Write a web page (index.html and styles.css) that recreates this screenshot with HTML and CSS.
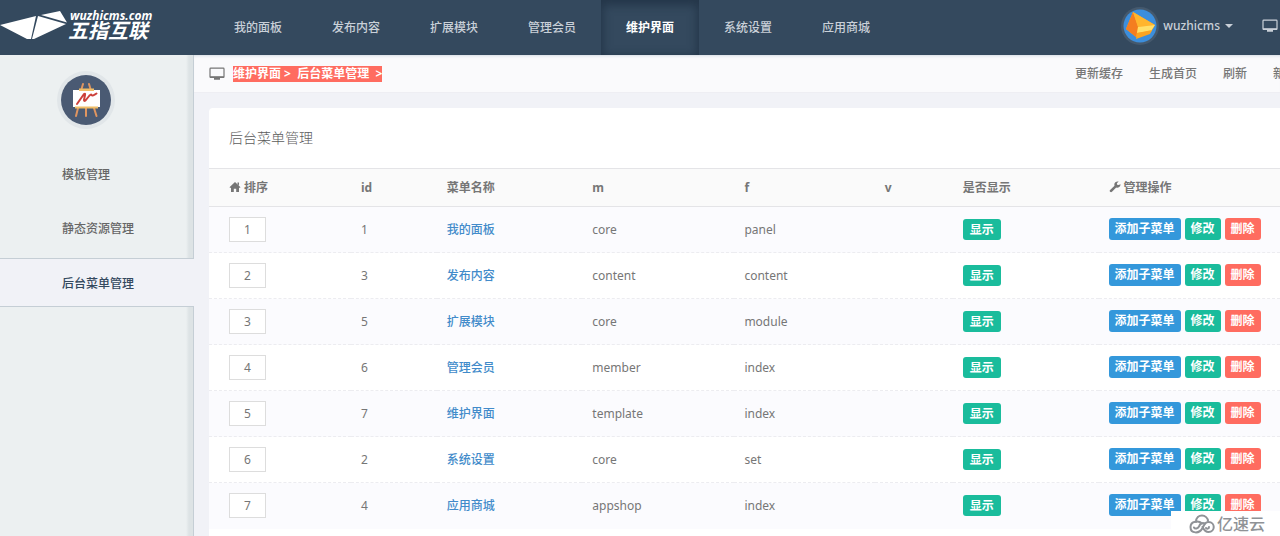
FILE: index.html
```html
<!DOCTYPE html>
<html lang="zh-CN">
<head>
<meta charset="utf-8">
<title>后台菜单管理</title>
<link rel="stylesheet" href="styles.css">
</head>
<body>
<svg class="defs" width="0" height="0" aria-hidden="true">
  <symbol id="monitor" viewBox="0 0 16 14"><path fill="none" stroke="currentColor" stroke-width="1.2" d="M1.700 1.200h12.600q.7 0 .7.7v7.800q0 .7-.7.7H1.700q-.7 0-.7-.7V1.900q0-.7.7-.7z"/><path fill="currentColor" d="M1 9.200h14v1.500H1zM5 10.500h6v2.300H5z"/></symbol>
</svg>
<header class="header">
  <a class="logo" href="#">
    <svg class="logo-mark" viewBox="0 0 68 32" aria-hidden="true"><path fill="#fff" d="M0 15 36 6 31 29 27 29zM38 6 66 14 34 29 32 29zM41 5 60 1 67 12.500z"/></svg>
    <span class="logo-text"><span class="logo-domain">wuzhicms.com</span><span class="logo-name">五指互联</span></span>
  </a>
  <nav class="nav">
    <a href="#">我的面板</a><a href="#">发布内容</a><a href="#">扩展模块</a><a href="#">管理会员</a><a class="active" href="#">维护界面</a><a href="#">系统设置</a><a href="#">应用商城</a>
  </nav>
  <div class="user">
    <button class="user-menu" type="button">
      <svg class="avatar" viewBox="0 0 40 40" aria-hidden="true"><circle cx="20" cy="20" r="19" fill="#45596d"/><circle cx="20" cy="20" r="16.500" fill="#3c8edc"/><path fill="#f9a526" d="M13 6 35 19 31 26 16 31 6 23z"/><path fill="#f47d20" d="M13 6 6 23 16 31 18 21z"/><path fill="#ffb52d" d="M13 6 35 19 18 21z"/><path fill="#ffdf69" d="M18 21 35 19 31 25 17 27z"/><path fill="#fba421" d="m17 27 15-3-2 4-14 5z"/></svg>
      <span>wuzhicms</span><span class="caret"></span>
    </button>
    <svg class="icon" role="img" aria-label="前台"><use href="#monitor"/></svg>
  </div>
</header>
<div class="body">
  <aside class="sidebar">
    <svg class="badge" viewBox="0 0 60 60" aria-hidden="true"><circle cx="30" cy="30" r="29" fill="#e1e6e9"/><circle cx="30" cy="30" r="25" fill="#4a5a73"/><g stroke="#e09560" stroke-width="2" stroke-linecap="round"><path d="m27 14-1.500 5M33 14l1.500 5M22 38l-2 8M30 38v8M38 38l2.500 8"/></g><path fill="#fff" d="M17 20h27v17H17z"/><path fill="#f0be68" d="M23 18.500h15v2.500H23zM19 36.500h23v2H19z"/><path fill="none" stroke="#cc403b" stroke-width="2" stroke-linecap="round" stroke-linejoin="round" d="m21 34 7-10q1.500-1 1 1l-1 5q0 1.500 1.500.5l4-5q1.500-1.500 2-.5 1 1.500 5-1.500"/></svg>
    <nav class="side-nav">
      <a href="#">模板管理</a>
      <a href="#">静态资源管理</a>
      <a class="active" href="#">后台菜单管理</a>
    </nav>
  </aside>
  <main class="main">
    <div class="toolbar">
      <svg class="icon" aria-hidden="true"><use href="#monitor"/></svg>
      <span class="crumbs">维护界面 &gt;&nbsp; 后台菜单管理 &nbsp;&gt;</span>
      <nav class="tools"><a href="#">更新缓存</a><a href="#">生成首页</a><a href="#">刷新</a><a href="#">新</a></nav>
    </div>
    <section class="card">
      <h1>后台菜单管理</h1>
      <table>
        <colgroup><col class="c-sort"><col class="c-id"><col class="c-name"><col class="c-m"><col class="c-f"><col class="c-v"><col class="c-show"><col></colgroup>
        <thead><tr>
          <th><svg class="th-icon" viewBox="0 0 12 12" aria-hidden="true"><path fill="currentColor" d="M6 1 11.500 6.200 10.700 7 10 6.400V11H7.200V7.800H4.800V11H2V6.400L1.300 7 .5 6.200zM8.500 1.500H10v3L8.500 3z"/></svg>排序</th>
          <th>id</th><th>菜单名称</th><th>m</th><th>f</th><th>v</th><th>是否显示</th>
          <th><svg class="th-icon" viewBox="0 0 12 12" aria-hidden="true"><path fill="currentColor" d="M11.500 3.200A3.300 3.300 0 0 1 7.200 6.500L3 10.800a1.300 1.300 0 0 1-1.900-1.900L5.500 4.700A3.300 3.300 0 0 1 9.700.6L7.900 2.300l.2 1.500 1.500.3z"/></svg>管理操作</th>
        </tr></thead>
        <tbody>
          <tr><td><input aria-label="排序" value="1"></td><td>1</td><td><a href="#">我的面板</a></td><td>core</td><td>panel</td><td></td><td><span class="label">显示</span></td><td><div class="actions"><button class="add">添加子菜单</button><button class="edit">修改</button><button class="del">删除</button></div></td></tr>
          <tr><td><input aria-label="排序" value="2"></td><td>3</td><td><a href="#">发布内容</a></td><td>content</td><td>content</td><td></td><td><span class="label">显示</span></td><td><div class="actions"><button class="add">添加子菜单</button><button class="edit">修改</button><button class="del">删除</button></div></td></tr>
          <tr><td><input aria-label="排序" value="3"></td><td>5</td><td><a href="#">扩展模块</a></td><td>core</td><td>module</td><td></td><td><span class="label">显示</span></td><td><div class="actions"><button class="add">添加子菜单</button><button class="edit">修改</button><button class="del">删除</button></div></td></tr>
          <tr><td><input aria-label="排序" value="4"></td><td>6</td><td><a href="#">管理会员</a></td><td>member</td><td>index</td><td></td><td><span class="label">显示</span></td><td><div class="actions"><button class="add">添加子菜单</button><button class="edit">修改</button><button class="del">删除</button></div></td></tr>
          <tr><td><input aria-label="排序" value="5"></td><td>7</td><td><a href="#">维护界面</a></td><td>template</td><td>index</td><td></td><td><span class="label">显示</span></td><td><div class="actions"><button class="add">添加子菜单</button><button class="edit">修改</button><button class="del">删除</button></div></td></tr>
          <tr><td><input aria-label="排序" value="6"></td><td>2</td><td><a href="#">系统设置</a></td><td>core</td><td>set</td><td></td><td><span class="label">显示</span></td><td><div class="actions"><button class="add">添加子菜单</button><button class="edit">修改</button><button class="del">删除</button></div></td></tr>
          <tr><td><input aria-label="排序" value="7"></td><td>4</td><td><a href="#">应用商城</a></td><td>appshop</td><td>index</td><td></td><td><span class="label">显示</span></td><td><div class="actions"><button class="add">添加子菜单</button><button class="edit">修改</button><button class="del">删除</button></div></td></tr>
        </tbody>
      </table>
    </section>
  </main>
</div>
<div class="watermark">
  <svg viewBox="0 0 26 20" aria-hidden="true"><g fill="none" stroke="#8f9296" stroke-width="2" stroke-linecap="round"><path d="M7 8C7 3.500 10 1.500 13 1.500S19 4 19 7"/><path d="M13 9.500C10 6.500 1.500 6.500 1.500 13c0 7 9 7 12 1 2-4 3-6 6-6 7 0 7 10 0 10-3 0-5-3-6-5"/><path d="M5 13.500c1 2 4 1 5-1 1-3 3-4 6-3M17 14c1 1 3 1 3-1"/></g></svg>
  <span>亿速云</span>
</div>
</body>
</html>
```
FILE: styles.css
```css
* { box-sizing: border-box; }
body {
  margin: 0;
  min-height: 100vh;
  display: flex;
  flex-direction: column;
  overflow: hidden;
  position: relative;
  background: #f1f2f7;
  color: #767676;
  font: 12px/20px "Noto Sans", "Noto Sans CJK SC", sans-serif;
}
a { color: inherit; text-decoration: none; }
button, input { font: inherit; color: inherit; }
.defs { position: absolute; }
.icon { width: 16px; height: 14px; flex: none; }

.header { display: flex; height: 55px; background: #34495e; color: #c9d0d8; }
.logo { flex: none; width: 209px; display: flex; padding-top: 10px; color: #fff; font-family: "Open Sans", "Noto Sans CJK SC", sans-serif; font-weight: 700; font-style: italic; }
.logo-mark { width: 68px; height: 32px; }
.logo-text { display: flex; flex-direction: column; }
.logo-domain { font-size: 12px; line-height: 11px; padding-left: 2px; }
.logo-name { font-size: 20px; line-height: 20px; font-weight: 700; }
.nav { display: flex; font-weight: 500; }
.nav a { padding: 0 25px; line-height: 55px; white-space: nowrap; }
.nav .active { color: #fff; font-weight: 700; box-shadow: inset 0 3px 10px 2px #243649; }
.user { margin-left: auto; display: flex; align-items: center; gap: 29px; padding-bottom: 4px; margin-right: 2px; }
.user-menu { display: flex; align-items: center; gap: 3px; padding: 0; border: 0; background: none; font-weight: 500; }
.avatar { width: 40px; height: 40px; }
.caret { border: 4px solid transparent; border-top-color: currentColor; border-bottom: 0; margin-left: 2px; }

.body { flex: 1; display: flex; }
.sidebar {
  width: 194px;
  flex: none;
  padding-top: 15px;
  background: linear-gradient(to right, transparent calc(100% - 7px), #dde3e5 calc(100% - 4px)) #ecf0f1;
  border-right: 1px solid #c5ced5;
  font-weight: 500;
}
.badge { display: block; width: 60px; height: 60px; margin: 0 0 20px 56px; }
.side-nav { display: flex; flex-direction: column; gap: 5px; margin-right: -1px; color: #666; }
.side-nav a { height: 49px; line-height: 49px; padding-left: 62px; }
.side-nav .active { background: #f1f2f7; color: #34495e; border: 1px solid #c5ced5; border-width: 1px 0; }

.main { flex: 1; min-width: 0; display: flex; flex-direction: column; }
.toolbar { display: flex; align-items: center; height: 38px; padding-left: 15px; background: #fafafc; border-bottom: 1px solid #eeeef3; box-shadow: inset 0 3px 3px -2px #d5dce4; font-weight: 500; }
.crumbs { margin-left: 8px; background: #ff6c60; color: #fff; line-height: 16px; font-weight: 700; white-space: nowrap; }
.tools { margin: 0 -5px 0 auto; display: flex; gap: 26px; line-height: 22px; white-space: nowrap; }
.card { flex: 1; margin: 15px 0 0 15px; background: #fff; border-radius: 4px 0 0 0; }
h1 { margin: 0; font-size: 14px; font-weight: 300; line-height: 60px; padding-left: 20px; color: #5c5c5c; }

table { width: 100%; table-layout: fixed; border-collapse: collapse; }
.c-sort { width: 142px; }
.c-id { width: 8%; }
.c-name { width: 13.600%; }
.c-m { width: 14.200%; }
.c-f { width: 13.100%; }
.c-v { width: 7.300%; }
.c-show { width: 13.600%; }
th, td { padding: 0 0 0 10px; text-align: left; }
th:first-child, td:first-child { padding-left: 20px; }
th { height: 38px; background: #fafafa; border: 1px solid #e4e4e7; border-width: 1px 0; font-weight: 700; }
td { height: 46px; border-bottom: 1px dashed #ececf0; }
tbody tr:nth-child(odd) { background: #fbfbfe; }
tbody tr:last-child td { border-bottom: 0; }
td a { color: #428bca; font-weight: 500; }
td input { display: block; width: 37px; height: 25px; padding: 0; border: 1px solid #ddd; background: #fff; text-align: center; }
.th-icon { width: 12px; height: 12px; margin-right: 3px; vertical-align: -1px; }
.label, .actions button { border: 0; border-radius: 3px; padding: 0 6px; color: #fff; font-weight: 700; line-height: 21px; white-space: nowrap; }
.label { display: inline-block; padding: 0 7px; background: #1abc9c; vertical-align: middle; }
.actions { display: flex; gap: 4px; padding-bottom: 1px; }
.actions button { line-height: 22px; }
.actions .add { background: #3498db; }
.actions .edit { background: #1abc9c; }
.actions .del { background: #ff6c60; }

.watermark { position: absolute; right: 0; bottom: 0; width: 109px; height: 25px; display: flex; align-items: center; gap: 2px; padding-left: 18px; background: #fff; color: #8f9296; font-size: 16px; font-weight: 500; }
.watermark svg { width: 26px; height: 20px; }
```
